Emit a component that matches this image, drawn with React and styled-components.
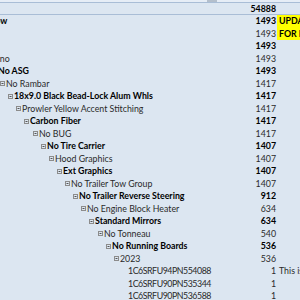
import React from 'react';
import styled, { createGlobalStyle } from 'styled-components';

const GlobalStyle = createGlobalStyle`
  html, body {
    margin: 0;
    padding: 0;
    background: #dce6f1;
    overflow: hidden;
  }
`;

const Sheet = styled.div`
  width: 300px;
  height: 300px;
  overflow: hidden;
  background: #dce6f1;
  font-family: Lato, "Open Sans", sans-serif;
  font-size: 8.8px;
  color: #262626;
`;

const HeaderStrip = styled.div`
  height: 2px;
  background: #e6edf6;
  border-bottom: 1px solid #a9bdd6;
  display: flex;
  padding-left: 207px;
`;

const FilterTab = styled.div`
  width: 10px;
  height: 2px;
  background: #b4bfcc;
`;

const Row = styled.div`
  display: grid;
  grid-template-columns: 230px 47px 23px;
  height: ${(p) => (p.$total ? '11px' : '12.5px')};
  line-height: ${(p) => (p.$total ? '11px' : '12.5px')};
  border-bottom: ${(p) => (p.$total ? '1px solid #a9bdd6' : 'none')};
  font-weight: ${(p) => (p.$bold ? 700 : 400)};
  color: ${(p) => (p.$bold ? '#000' : '#2a2a2a')};
`;

const LabelCell = styled.div`
  white-space: nowrap;
  position: relative;
  z-index: 1;
`;

const Label = styled.div`
  display: flex;
  align-items: center;
  height: 100%;
  margin-left: ${(p) => p.$indent}px;
  letter-spacing: ${(p) => (p.$leaf ? '-0.45px' : 'normal')};
`;

const Toggle = styled.svg`
  width: 5px;
  height: 5px;
  flex: none;
  margin-right: 1px;
`;

const Spacer = styled.span`
  width: 6px;
  flex: none;
`;

const ValueCell = styled.div`
  text-align: right;
  padding-right: 1px;
  white-space: nowrap;
`;

const NoteCell = styled.div`
  padding-left: 2px;
  white-space: nowrap;
  overflow: hidden;
  background: ${(p) => (p.$highlight ? '#ffff00' : 'transparent')};
  font-weight: ${(p) => (p.$highlight ? 700 : 400)};
  color: ${(p) => (p.$highlight ? '#000' : '#2a2a2a')};
`;

const STEP = 8.13;

const rows = [
  { level: -5, label: 'Sun Yellow', value: 1493, bold: true, note: 'UPDATE', hl: true },
  { level: -4, label: 'JT', value: 1493, note: 'FOR MOPAR', hl: true },
  { level: -3, label: '4x4', value: 1493, bold: true },
  { level: -2, label: 'Zeno', value: 1493 },
  { level: -1, label: 'No ASG', value: 1493, bold: true },
  { level: 0, label: 'No Rambar', value: 1417 },
  { level: 1, label: '18x9.0 Black Bead-Lock Alum Whls', value: 1417, bold: true },
  { level: 2, label: 'Prowler Yellow Accent Stitching', value: 1417 },
  { level: 3, label: 'Carbon Fiber', value: 1417, bold: true },
  { level: 4, label: 'No BUG', value: 1417 },
  { level: 5, label: 'No Tire Carrier', value: 1407, bold: true },
  { level: 6, label: 'Hood Graphics', value: 1407 },
  { level: 7, label: 'Ext Graphics', value: 1407, bold: true },
  { level: 8, label: 'No Trailer Tow Group', value: 1407 },
  { level: 9, label: 'No Trailer Reverse Steering', value: 912, bold: true },
  { level: 10, label: 'No Engine Block Heater', value: 634 },
  { level: 11, label: 'Standard Mirrors', value: 634, bold: true },
  { level: 12, label: 'No Tonneau', value: 540 },
  { level: 13, label: 'No Running Boards', value: 536, bold: true },
  { level: 14, label: '2023', value: 536 },
  { level: 15, label: '1C6SRFU94PN554088', value: 1, leaf: true, note: 'This is a' },
  { level: 15, label: '1C6SRFU90PN535344', value: 1, leaf: true },
  { level: 15, label: '1C6SRFU90PN536588', value: 1, leaf: true },
];

function MinusBox() {
  return (
    <Toggle viewBox="0 0 5 5">
      <rect x="0.5" y="0.5" width="4" height="4" fill="none" stroke="#8c8c8c" strokeWidth="1" />
      <line x1="1.5" y1="2.5" x2="3.5" y2="2.5" stroke="#555" strokeWidth="1" />
    </Toggle>
  );
}

export default function App() {
  return (
    <Sheet>
      <GlobalStyle />
      <HeaderStrip>
        <FilterTab />
      </HeaderStrip>
      <Row $total $bold>
        <LabelCell />
        <ValueCell>54888</ValueCell>
        <NoteCell />
      </Row>
      {rows.map((r, i) => (
        <Row key={i} $bold={r.bold}>
          <LabelCell>
            <Label $indent={Math.round(r.level * STEP)} $leaf={r.leaf}>
              {r.leaf ? <Spacer /> : <MinusBox />}
              <span>{r.label}</span>
            </Label>
          </LabelCell>
          <ValueCell>{r.value}</ValueCell>
          <NoteCell $highlight={r.hl}>{r.note}</NoteCell>
        </Row>
      ))}
    </Sheet>
  );
}
